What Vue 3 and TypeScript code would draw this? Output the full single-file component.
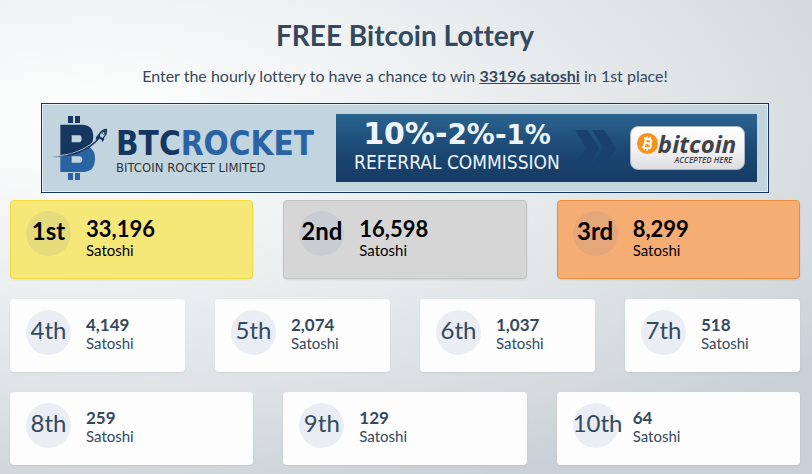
<script setup lang="ts">
interface Prize {
  rank: string
  amount: number
  tone?: 'gold' | 'silver' | 'bronze'
}

const rows: Prize[][] = [
  [
    { rank: '1st', amount: 33196, tone: 'gold' },
    { rank: '2nd', amount: 16598, tone: 'silver' },
    { rank: '3rd', amount: 8299, tone: 'bronze' },
  ],
  [
    { rank: '4th', amount: 4149 },
    { rank: '5th', amount: 2074 },
    { rank: '6th', amount: 1037 },
    { rank: '7th', amount: 518 },
  ],
  [
    { rank: '8th', amount: 259 },
    { rank: '9th', amount: 129 },
    { rank: '10th', amount: 64 },
  ],
]

const format = (n: number): string => n.toLocaleString('en-US')
</script>

<template>
  <main class="page">
    <h1 class="title">FREE Bitcoin Lottery</h1>
    <p class="intro">
      Enter the hourly lottery to have a chance to win
      <strong>{{ rows[0][0].amount }} satoshi</strong> in 1st place!
    </p>

    <a class="banner" href="#">
      <svg class="logo" viewBox="45 54 174 198" aria-hidden="true">
        <defs>
          <linearGradient id="trail" x1="0" x2="1">
            <stop offset="0" stop-color="#14365f" stop-opacity="0.1" />
            <stop offset="0.4" stop-color="#14365f" />
          </linearGradient>
          <clipPath id="upper">
            <path d="M40 50H220V110Q170 172 60 176L40 176Z" />
          </clipPath>
          <clipPath id="lower">
            <path d="M220 110Q170 172 60 176L40 176V255H220Z" />
          </clipPath>
          <path
            id="b-shape"
            fill-rule="evenodd"
            d="M96 57h15v21h-15zM117 57h15v21h-15zM73 83H142Q171 85 172 116Q172 137 160 150Q178 160 177 188Q176 222 144 225H73ZM107 115V136H130Q137 135 137 125Q137 116 130 115ZM107 178V197H132Q139 196 139 187Q139 179 132 178ZM96 228h15v21h-15zM117 228h15v21h-15z"
          />
        </defs>
        <use href="#b-shape" fill="#14365f" clip-path="url(#upper)" />
        <use href="#b-shape" fill="#2a63a3" clip-path="url(#lower)" />
        <path d="M66 180Q146 174 190 123L186 119Q146 166 72 174Z" fill="#c2d5de" />
        <path d="M48 178Q140 176 189 121L192 124Q142 182 48 182Z" fill="url(#trail)" />
        <path
          d="M213 95Q196 95 187 112L179 122L180 129L188 123L197 129L198 135L204 130L205 121Q215 112 213 95Z"
          fill="#14365f"
        />
        <path d="M208 100Q196 102 191 117L199 123Q210 114 208 100Z" fill="#c2d5de" />
        <path d="M209 99Q199 99 195 108L204 114Q210 108 209 99Z" fill="#14365f" />
        <circle cx="202" cy="108" r="3" fill="#c2d5de" />
      </svg>
      <span class="brand">
        <span class="brand-name">BTC<span class="brand-accent">ROCKET</span></span>
        <span class="brand-sub">BITCOIN ROCKET LIMITED</span>
      </span>
      <span class="offer">
        <span class="offer-text">
          <span class="rates"><span class="rate-a">10%-</span><span class="rate-b">2%-</span><span class="rate-c">1%</span></span>
          <span class="commission">REFERRAL COMMISSION</span>
        </span>
        <svg class="arrows" viewBox="0 0 123 108" aria-hidden="true">
          <path d="M0 0H37L72 54L37 108H0L34 54Z" />
          <path d="M51 0H88L123 54L88 108H51L85 54Z" />
        </svg>
        <span class="badge">
          <svg class="coin" viewBox="0 0 64 64" aria-hidden="true">
            <circle cx="32" cy="32" r="32" fill="#f7931a" />
            <g transform="rotate(14 32 32)" fill="none" stroke="#fff">
              <path d="M24 18V46M18 18H34Q42 18 42 25Q42 31 34 31H24M34 31Q44 32 44 39Q44 46 35 46H18" stroke-width="6" />
              <path d="M27 10V18M36 10V18M27 46V54M36 46V54" stroke-width="4" />
            </g>
          </svg>
          <span class="badge-text">
            <span class="badge-name">bitcoin</span>
            <span class="badge-sub">ACCEPTED HERE</span>
          </span>
        </span>
      </span>
    </a>

    <section class="prizes">
      <ul v-for="(row, i) in rows" :key="i" class="row">
        <li v-for="p in row" :key="p.rank" class="card" :class="p.tone && ['podium', p.tone]">
          <span class="rank">{{ p.rank }}</span>
          <span class="prize">
            <strong class="amount">{{ format(p.amount) }}</strong>
            <span class="unit">Satoshi</span>
          </span>
        </li>
      </ul>
    </section>
  </main>
</template>

<style>
body {
  margin: 0;
}
</style>

<style scoped>
.page {
  box-sizing: border-box;
  min-height: 100vh;
  padding: 16px 12px 9px 10px;
  color: #34495e;
  font-family: Lato, sans-serif;
  font-variant-ligatures: none;
  background: radial-gradient(ellipse 128% 94% at 11% 26%, #fff 0%, #eceff0 37%, #dde2e4 62%, #cfd6d9 81%, #c9d0d8 88%);
}

.title {
  margin: 0;
  font-size: 28px;
  line-height: 38px;
  text-align: center;
}

.intro {
  margin: 11px 0 17px;
  font-size: 16px;
  line-height: 21px;
  text-align: center;
}

.intro strong {
  text-decoration: underline;
}

.banner {
  display: flex;
  align-items: center;
  box-sizing: border-box;
  max-width: 728px;
  height: 90px;
  margin: 0 auto 7px;
  padding: 0 11px 0 9px;
  border: 1px solid #14365f;
  box-shadow: inset 0 0 0 1px #e6eff5;
  background: #c2d5de;
  color: #14365f;
  font-family: "DejaVu Sans Condensed", "DejaVu Sans", sans-serif;
  text-decoration: none;
  white-space: nowrap;
}

.logo {
  flex: none;
  width: 58px;
  height: 66px;
}

.brand {
  display: flex;
  flex: 1;
  flex-direction: column;
  padding: 6px 0 0 7px;
}

.brand-name {
  font-size: 33px;
  font-weight: 700;
  line-height: 34px;
}

.brand-accent {
  color: #2a63a3;
}

.brand-sub {
  color: #333;
  font-size: 13px;
  line-height: 14px;
}

.offer {
  display: flex;
  align-items: center;
  box-sizing: border-box;
  width: 421px;
  height: 68px;
  padding: 0 13px 0 18px;
  background: linear-gradient(#2a648f, #1c4975 50%, #153b63);
  color: #eef5ff;
}

.offer-text {
  display: flex;
  flex: 1;
  flex-direction: column;
  align-items: center;
}

.rates {
  font-family: "DejaVu Sans", sans-serif;
  font-weight: 700;
  line-height: 26px;
}

.rate-a {
  font-size: 30px;
}

.rate-b {
  font-size: 28px;
}

.rate-c {
  font-size: 26px;
}

.commission {
  padding-bottom: 4px;
  font-size: 19px;
  line-height: 20px;
}

.arrows {
  flex: none;
  width: 41px;
  height: 36px;
  margin: 0 14px 0 15px;
  fill: #18426d;
}

.badge {
  display: flex;
  flex: none;
  box-sizing: border-box;
  width: 115px;
  height: 44px;
  padding: 6px;
  border: 1px solid #aab4c4;
  border-radius: 8px;
  background: linear-gradient(#fff, #f2f2f3 55%, #dcdde0);
  color: #3f4347;
  font-family: "Open Sans", sans-serif;
  font-style: italic;
}

.coin {
  flex: none;
  width: 21px;
  height: 21px;
}

.badge-text {
  display: flex;
  flex-direction: column;
  align-items: flex-end;
}

.badge-name {
  font-size: 24px;
  font-weight: 700;
  line-height: 22px;
}

.badge-sub {
  padding-right: 4px;
  font-size: 8px;
  font-weight: 600;
  line-height: 10px;
}

.prizes {
  display: grid;
  gap: 20px;
}

.row {
  display: grid;
  grid-auto-columns: minmax(0, 1fr);
  grid-auto-flow: column;
  gap: 30px;
  margin: 0;
  padding: 0;
  list-style: none;
}

.card {
  display: grid;
  grid-template-columns: 45px 1fr;
  gap: 15px;
  box-sizing: border-box;
  padding: 11px 16px 17px;
  border-radius: 4px;
  background: #fdfdfe;
  box-shadow: 0 1px 2px rgba(0, 0, 0, 0.08);
}

.rank {
  width: 45px;
  height: 45px;
  border-radius: 50%;
  background: #eaeef4;
  font-size: 24px;
  line-height: 40px;
  text-align: center;
}

.prize {
  display: flex;
  flex-direction: column;
  padding-top: 5px;
}

.amount {
  font-size: 17px;
  line-height: 20px;
}

.unit {
  font-size: 15px;
  line-height: 16px;
}

.podium {
  padding: 10px 15px 20px;
  border: 1px solid;
  color: #000;
}

.podium .rank {
  font-weight: 700;
}

.podium .amount {
  font-size: 22px;
  line-height: 26px;
}

.gold {
  border-color: #f3dc3c;
  background: #f6e878;
}

.gold .rank {
  background: #e5db7a;
}

.silver {
  border-color: #c0c2c4;
  background: #d6d6d6;
}

.silver .rank {
  background: #c9cdd3;
}

.bronze {
  border-color: #ee8c38;
  background: #f5ad74;
}

.bronze .rank {
  background: #e4a779;
}
</style>
